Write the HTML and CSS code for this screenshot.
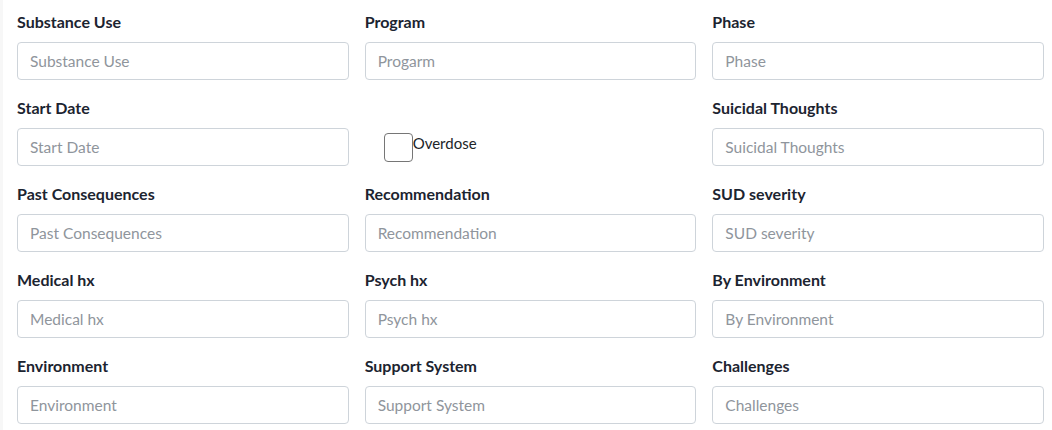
FILE: index.html
```html
<!DOCTYPE html>
<html>
<head>
<meta charset="utf-8">
<link rel="stylesheet" href="styles.css">
</head>
<body>
<div class="page">
  <form class="grid">
    <div class="field"><label class="lbl">Substance Use</label><input class="inp" placeholder="Substance Use"></div>
    <div class="field"><label class="lbl">Program</label><input class="inp" placeholder="Progarm"></div>
    <div class="field"><label class="lbl">Phase</label><input class="inp" placeholder="Phase"></div>

    <div class="field"><label class="lbl">Start Date</label><input class="inp" placeholder="Start Date"></div>
    <div class="field check-field"><div class="check"><span class="box"></span><span class="check-text">Overdose</span></div></div>
    <div class="field"><label class="lbl">Suicidal Thoughts</label><input class="inp" placeholder="Suicidal Thoughts"></div>

    <div class="field"><label class="lbl">Past Consequences</label><input class="inp" placeholder="Past Consequences"></div>
    <div class="field"><label class="lbl">Recommendation</label><input class="inp" placeholder="Recommendation"></div>
    <div class="field"><label class="lbl">SUD severity</label><input class="inp" placeholder="SUD severity"></div>

    <div class="field"><label class="lbl">Medical hx</label><input class="inp" placeholder="Medical hx"></div>
    <div class="field"><label class="lbl">Psych hx</label><input class="inp" placeholder="Psych hx"></div>
    <div class="field"><label class="lbl">By Environment</label><input class="inp" placeholder="By Environment"></div>

    <div class="field"><label class="lbl">Environment</label><input class="inp" placeholder="Environment"></div>
    <div class="field"><label class="lbl">Support System</label><input class="inp" placeholder="Support System"></div>
    <div class="field"><label class="lbl">Challenges</label><input class="inp" placeholder="Challenges"></div>
  </form>
</div>
</body>
</html>
```
FILE: styles.css
```css
html, body {
  margin: 0;
  padding: 0;
  background: #ffffff;
  font-family: "Lato", "Noto Sans", sans-serif;
  color: #212529;
}
.page {
  border-left: 3px solid #f7f7f7;
  height: 430px;
  overflow: hidden;
  box-sizing: border-box;
}
.grid {
  display: grid;
  grid-template-columns: repeat(3, 1fr);
  column-gap: 16px;
  padding: 10px 8px 0 14px;
  margin: 0;
}
.field {
  display: flex;
  flex-direction: column;
  margin-bottom: 16px;
}
.lbl {
  font-weight: 700;
  font-size: 16px;
  line-height: 24px;
  height: 24px;
  margin-bottom: 8px;
  color: #1c2430;
}
.inp {
  box-sizing: border-box;
  height: 38px;
  border: 1px solid #ced4da;
  border-radius: 4px;
  padding: 0 12px;
  font-family: inherit;
  font-size: 15.5px;
  color: #495057;
  background: #fff;
  outline: none;
}
.inp::placeholder {
  color: #8f959c;
}
.check-field {
  justify-content: flex-end;
}
.check {
  height: 38px;
  display: flex;
  align-items: center;
  padding-left: 19px;
}
.box {
  width: 27px;
  height: 27px;
  border: 1px solid #767676;
  border-radius: 4px;
  background: #fff;
  flex: none;
}
.check-text {
  font-size: 15px;
  line-height: 20px;
  margin-top: -8px;
  color: #212529;
}
```
